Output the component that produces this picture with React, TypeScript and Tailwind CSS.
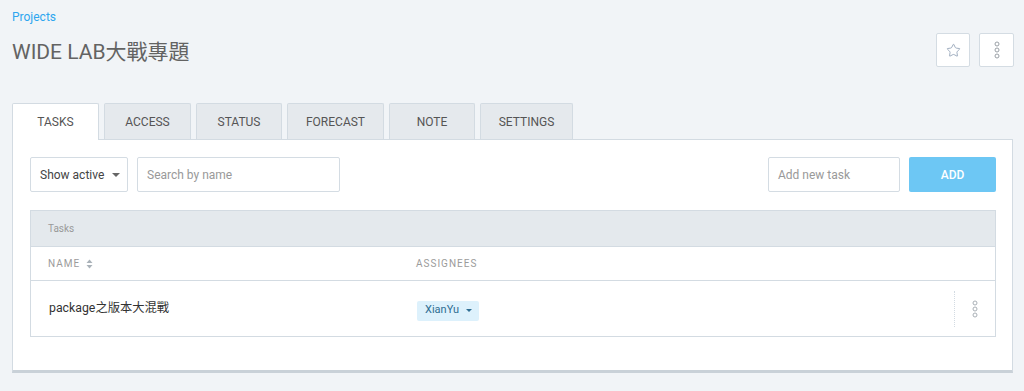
import React from 'react';
import { Star } from 'lucide-react';

const tabs = ['TASKS', 'ACCESS', 'STATUS', 'FORECAST', 'NOTE', 'SETTINGS'];
const tabWidths: Record<string, string> = {
  TASKS: 'w-[87px]',
  ACCESS: 'w-[87px]',
  STATUS: 'w-[86px]',
  FORECAST: 'w-[97px]',
  NOTE: 'w-[86px]',
  SETTINGS: 'w-[93px]',
};

const font = { fontFamily: 'Roboto, "Noto Sans CJK TC", sans-serif' };

const Caret = ({ w = 8 }: { w?: number }) => (
  <svg width={w} height={w / 2} viewBox="0 0 8 4" aria-hidden="true">
    <path d="M0 0 L8 0 L4 4 Z" fill="currentColor" />
  </svg>
);

const DotsIcon = ({ color = '#9aa5ae' }: { color?: string }) => (
  <svg width="6" height="18" viewBox="0 0 6 18" aria-hidden="true">
    <circle cx="3" cy="3" r="2" fill="none" stroke={color} strokeWidth="1" />
    <circle cx="3" cy="9" r="2" fill="none" stroke={color} strokeWidth="1" />
    <circle cx="3" cy="15" r="2" fill="none" stroke={color} strokeWidth="1" />
  </svg>
);

const SortIcon = () => (
  <svg width="7" height="10" viewBox="0 0 7 10" aria-hidden="true">
    <path d="M0.5 4 L3.5 0.5 L6.5 4 Z" fill="#aab2b9" />
    <path d="M0.5 6 L3.5 9.5 L6.5 6 Z" fill="#aab2b9" />
  </svg>
);

export default function App() {
  return (
    <div className="min-h-[391px] bg-[#f1f4f7] pl-[12px] pr-[10px] pt-[10px]" style={font}>
      {/* breadcrumb */}
      <div className="text-[12px] leading-[14px] text-[#2ea6ef]">Projects</div>

      {/* title row */}
      <div className="mt-[9px] flex h-[34px] items-center justify-between">
        <h1 className="pt-[4px] text-[21px] leading-[24px] text-[#636363]">WIDE LAB大戰專題</h1>
        <div className="flex gap-[9px]">
          <button className="flex h-[34px] w-[34px] items-center justify-center rounded-[2px] border border-[#d4dce3] bg-white">
            <Star size={15} strokeWidth={1.3} color="#8b9db1" />
          </button>
          <button className="flex h-[34px] w-[35px] items-center justify-center rounded-[2px] border border-[#d4dce3] bg-white">
            <DotsIcon color="#9aa0a6" />
          </button>
        </div>
      </div>

      {/* tabs */}
      <div className="mt-[36px] flex gap-[5px]">
        {tabs.map((t, i) => (
          <div
            key={t}
            className={`${tabWidths[t]} flex items-center justify-center rounded-t-[2px] border border-b-0 border-[#d3dbe2] text-[12px] text-[#555] ${
              i === 0 ? 'relative z-10 -mb-px h-[37px] bg-white' : 'h-[36px] bg-[#e5e9ed]'
            }`}
          >
            {t}
          </div>
        ))}
      </div>

      {/* panel */}
      <div className="mr-px border border-b-[3px] border-[#d3dbe2] border-b-[#c9d1d8] bg-white pb-[33px] pl-[17px] pr-[16px] pt-[17px]">
        <div className="flex h-[35px] items-stretch justify-between">
          <div className="flex gap-[9px]">
            <div className="flex w-[98px] items-center gap-[8px] rounded-[2px] border border-[#d4dce3] pl-[9px] text-[12px] text-[#444]">
              Show active
              <span className="text-[#666]"><Caret /></span>
            </div>
            <div className="flex w-[203px] items-center rounded-[2px] border border-[#d4dce3] pl-[9px] text-[12px] text-[#999]">
              Search by name
            </div>
          </div>
          <div className="flex gap-[9px]">
            <div className="flex w-[132px] items-center rounded-[2px] border border-[#d4dce3] pl-[9px] text-[12px] text-[#999]">
              Add new task
            </div>
            <button className="w-[87px] rounded-[2px] bg-[#6dc7f4] text-[12px] font-medium text-white">ADD</button>
          </div>
        </div>

        {/* table */}
        <div className="mt-[18px] border border-[#d3dbe2]">
          <div className="flex h-[35px] items-center bg-[#e4e9ed] pl-[17px] text-[10px] text-[#999]">Tasks</div>
          <div className="flex h-[35px] items-center border-y border-[#d3dbe2] text-[10px] tracking-[0.1em] text-[#9b9b9b]">
            <div className="flex w-[385px] items-center gap-[6px] pl-[17px]">
              NAME <SortIcon />
            </div>
            <div>ASSIGNEES</div>
          </div>
          <div className="flex h-[55px] items-center">
            <div className="w-[386px] pl-[18px] text-[12.3px] text-[#333]">package之版本大混戰</div>
            <div className="flex-1">
              <span className="inline-flex h-[20px] items-center gap-[7px] rounded-[2px] bg-[#ddf1fc] pl-[8px] pr-[7px] text-[11px] text-[#2f6e93]">
                XianYu
                <Caret w={6} />
              </span>
            </div>
            <div className="flex h-[36px] w-[41px] items-center justify-center border-l border-dotted border-[#d3dbe2]">
              <DotsIcon color="#a9b0b6" />
            </div>
          </div>
        </div>
      </div>
    </div>
  );
}
